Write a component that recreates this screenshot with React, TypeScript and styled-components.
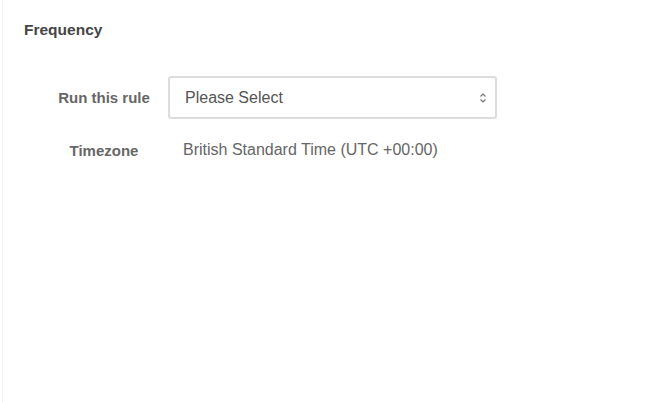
import React from 'react'
import styled, { createGlobalStyle } from 'styled-components'

const GlobalStyle = createGlobalStyle`
  html, body {
    margin: 0;
    padding: 0;
    background: #ffffff;
  }
  body {
    font-family: "Liberation Sans", Arial, sans-serif;
  }
`

const Panel = styled.div`
  box-sizing: border-box;
  width: 650px;
  height: 402px;
  padding: 21px 21px;
  background: #ffffff;
  border-left: 1px solid #eef5f4;
  margin-left: 2px;
`

const Title = styled.h2`
  margin: 0;
  font-size: 15.5px;
  font-weight: 700;
  color: #454545;
  line-height: 18px;
`

const Form = styled.div`
  display: grid;
  grid-template-columns: 112px 329px;
  column-gap: 8px;
  row-gap: 22px;
  align-items: center;
  margin-top: 37px;
  margin-left: 24px;
`

const Label = styled.div`
  text-align: center;
  font-size: 15px;
  font-weight: 700;
  color: #666666;
`

const SelectBox = styled.div`
  box-sizing: border-box;
  height: 43px;
  display: flex;
  align-items: center;
  justify-content: space-between;
  padding: 0 8px 0 15px;
  border: 2px solid #dcdcdc;
  border-radius: 3px;
  font-size: 16px;
  color: #555555;
  cursor: pointer;
`

const Value = styled.div`
  padding-left: 15px;
  font-size: 16px;
  color: #666666;
`

function Chevrons() {
  return (
    <svg width="8" height="12" viewBox="0 0 8 12" fill="none" stroke="#777" strokeWidth="1.2">
      <path d="M1.5 4.5 L4 2 L6.5 4.5" />
      <path d="M1.5 7.5 L4 10 L6.5 7.5" />
    </svg>
  )
}

export default function App() {
  return (
    <>
      <GlobalStyle />
      <Panel>
        <Title>Frequency</Title>
        <Form>
          <Label>Run this rule</Label>
          <SelectBox>
            Please Select
            <Chevrons />
          </SelectBox>
          <Label>Timezone</Label>
          <Value>British Standard Time (UTC +00:00)</Value>
        </Form>
      </Panel>
    </>
  )
}
